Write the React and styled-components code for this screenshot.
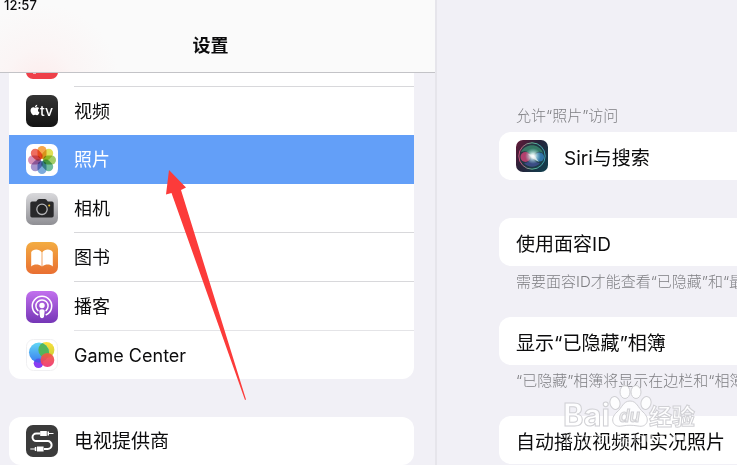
import React from "react";
import styled, { createGlobalStyle } from "styled-components";
import { FaApple } from "react-icons/fa";

const GlobalStyle = createGlobalStyle`
  * {
    box-sizing: border-box;
  }

  body {
    margin: 0;
    overflow: hidden;
    background-color: #f1f0f6;
    color: #0c0c0d;
    font-family: Inter, "Noto Sans CJK SC", sans-serif;
    font-size: 18px;
  }
`;

const Page = styled.div`
  position: relative;
  display: grid;
  grid-template-columns: minmax(0, 593fr) minmax(0, 407fr);
  height: 100vh;
  overflow: hidden;
`;

const Sidebar = styled.aside`
  border-right: 2px solid #e6e5eb;
  overflow: hidden;
`;

const Header = styled.header`
  height: 73px;
  padding: 0 22px 0 4px;
  border-bottom: 1px solid #c3c3c7;
  background: radial-gradient(circle at 40px 84px, #fdecec, #fbf5f5 35px, #fafafa 80px);
`;

const Time = styled.time`
  display: block;
  height: 12px;
  line-height: 10px;
  font-size: 13px;
  font-weight: 500;
`;

const Title = styled.h1`
  margin: 0;
  padding: 20px 0 0 4px;
  line-height: 28px;
  font-size: 18px;
  font-weight: 700;
  text-align: center;
`;

const Nav = styled.nav`
  padding: 0 21px 0 9px;
`;

const Group = styled.div`
  margin-bottom: 38px;
  border-radius: ${(props) => (props.$open ? "0 0 12px 12px" : "12px")};
  background-color: #fff;
  overflow: hidden;
`;

const Row = styled.a`
  display: flex;
  align-items: center;
  padding-left: 17px;
  background-color: ${(props) => (props.$active ? "#639ff8" : "transparent")};
  color: ${(props) => (props.$active ? "#fff" : "inherit")};
  font-size: ${(props) => (props.$large ? "19px" : "18px")};
  text-decoration: none;
`;

const CutRow = styled(Row)`
  height: 14px;
  align-items: flex-end;
  overflow: hidden;

  svg {
    margin-bottom: 8px;
  }
`;

const Label = styled.span`
  flex: 1;
  align-self: stretch;
  min-height: ${(props) => (props.$cut ? "0" : "48px")};
  margin-left: 16px;
  padding-top: 2px;
  line-height: 46px;
  border-bottom: ${(props) => (props.$line ? "1px solid" : "0 solid")};
  border-color: ${(props) => props.$line};
`;

const Icon = styled.svg`
  display: block;
  flex: none;
  width: 32px;
  height: 32px;
`;

const Detail = styled.main`
  padding: 106px 0 0 62px;
  overflow: hidden;
  white-space: nowrap;
`;

const Caption = styled.h2`
  margin: 0;
  padding: 0 0 6px 17px;
  line-height: 20px;
  font-size: 15px;
  font-weight: 300;
  color: #7e7e82;
`;

const Setting = styled.button`
  display: flex;
  align-items: center;
  gap: 16px;
  width: 100%;
  height: 48px;
  padding: 0 0 0 17px;
  border: 0;
  border-radius: 12px 0 0 12px;
  background-color: #fff;
  color: inherit;
  font: inherit;
  font-size: 19px;
  text-align: left;
  white-space: nowrap;
`;

const Spacer = styled.div`
  height: 38px;
`;

const Note = styled.p`
  height: 51px;
  margin: 0;
  padding: 6px 0 0 17px;
  line-height: 20px;
  font-size: 15px;
  font-weight: 300;
  color: #7e7e82;
`;

const Arrow = styled.svg`
  position: absolute;
  left: 160px;
  top: 165px;
  width: 90px;
  height: 240px;
  pointer-events: none;
`;

const Watermark = styled.svg`
  position: absolute;
  right: 36px;
  bottom: 10px;
  width: 140px;
  height: 72px;
  pointer-events: none;
`;

const NewsIcon = () => (
  <Icon viewBox="0 0 32 32">
    <rect width="32" height="32" rx="7" fill="#ee4049" />
    <path d="M7 22h3v5H7z" fill="#fff" opacity=".6" />
  </Icon>
);

const TvIcon = () => (
  <Icon viewBox="0 0 32 32">
    <defs>
      <linearGradient id="tv" x2="0" y2="1">
        <stop stopColor="#343434" />
        <stop offset="1" stopColor="#131313" />
      </linearGradient>
    </defs>
    <rect width="32" height="32" rx="7" fill="url(#tv)" />
    <FaApple x="3" y="9" size="12" color="#fff" />
    <text x="14" y="21" fontSize="14" fontWeight="500" fill="#fff">
      tv
    </text>
  </Icon>
);

const petals = [
  "#f59a32",
  "#dcdc3e",
  "#94c653",
  "#5bb391",
  "#6a9fd8",
  "#9a86c6",
  "#d183b0",
  "#ec5a4a",
];

const PhotosIcon = () => (
  <Icon viewBox="0 0 32 32">
    <rect width="32" height="32" rx="7" fill="#fff" />
    {petals.map((color, index) => (
      <rect
        key={color}
        x="11.5"
        y="2"
        width="9"
        height="13"
        rx="4.5"
        fill={color}
        opacity="0.88"
        style={{ mixBlendMode: "multiply" }}
        transform={`rotate(${index * 45} 16 16)`}
      />
    ))}
  </Icon>
);

const CameraIcon = () => (
  <Icon viewBox="0 0 32 32">
    <defs>
      <linearGradient id="camera" x2="0" y2="1">
        <stop stopColor="#d9d9dc" />
        <stop offset="1" stopColor="#8f8f94" />
      </linearGradient>
    </defs>
    <rect width="32" height="32" rx="7" fill="url(#camera)" />
    <path
      d="M6 8.600h4.200l1.600-2q.5-.6 1.300-.6h5.800q.8 0 1.300.6l1.600 2H26q1.700 0 1.700 1.700v12.500q0 1.700-1.700 1.700H6q-1.700 0-1.700-1.700V10.300Q4.300 8.600 6 8.600z"
      fill="#29292b"
    />
    <circle cx="16" cy="16.300" r="5.200" fill="#222" stroke="#b5b5b8" strokeWidth="1.300" />
    <circle cx="23.200" cy="12.500" r="1" fill="#f7c531" />
  </Icon>
);

const BooksIcon = () => (
  <Icon viewBox="0 0 32 32">
    <defs>
      <linearGradient id="books" x2="0" y2="1">
        <stop stopColor="#f3ac42" />
        <stop offset="1" stopColor="#e96f32" />
      </linearGradient>
    </defs>
    <rect width="32" height="32" rx="7" fill="url(#books)" />
    <path
      d="M15.600 10.300C14.300 8.300 12.300 7.500 10.300 7.500 8 7.500 6 8.500 5.200 10.300v14.200c1.500-1.400 3.200-2 5.100-2 2 0 3.800.6 5.300 2z"
      fill="#fff"
    />
    <path
      d="M16.400 10.300C17.700 8.300 19.700 7.500 21.700 7.500c2.300 0 4.300 1 5.100 2.800v14.200c-1.500-1.400-3.200-2-5.100-2-2 0-3.800.6-5.300 2z"
      fill="#fff"
    />
  </Icon>
);

const PodcastsIcon = () => (
  <Icon viewBox="0 0 32 32">
    <defs>
      <linearGradient id="podcasts" x2="0" y2="1">
        <stop stopColor="#c270ee" />
        <stop offset="1" stopColor="#7536b6" />
      </linearGradient>
    </defs>
    <rect width="32" height="32" rx="7" fill="url(#podcasts)" />
    <g fill="none" stroke="#fff" strokeWidth="1.500" strokeLinecap="round">
      <path d="M11.800 23.800A9.700 9.700 0 1 1 20.200 23.800" />
      <path d="M12 19.600A6.100 6.100 0 1 1 20 19.600" />
    </g>
    <circle cx="16" cy="14.500" r="2.700" fill="#fff" />
    <path
      d="M16 18.200c1.900 0 2.700.9 2.600 2.300l-.6 4.900q-.3 1.800-2 1.800t-2-1.800l-.6-4.900c-.1-1.400.7-2.300 2.600-2.300z"
      fill="#fff"
    />
  </Icon>
);

const GameCenterIcon = () => (
  <Icon viewBox="0 0 32 32">
    <defs>
      <linearGradient id="gc-blue" x2="0" y2="1">
        <stop stopColor="#62d8f5" />
        <stop offset="1" stopColor="#3a7df0" />
      </linearGradient>
      <linearGradient id="gc-yellow" x2="0" y2="1">
        <stop stopColor="#fbe03e" />
        <stop offset="1" stopColor="#c6cf35" />
      </linearGradient>
      <linearGradient id="gc-red" x2="0" y2="1">
        <stop stopColor="#f1603c" />
        <stop offset="1" stopColor="#ef3474" />
      </linearGradient>
      <clipPath id="gc-clip">
        <circle cx="13" cy="13.500" r="10" />
      </clipPath>
    </defs>
    <rect x=".5" y=".5" width="31" height="31" rx="7" fill="#fff" stroke="#f0f0f2" />
    <circle cx="12.500" cy="24.300" r="4.800" fill="#8a3df2" />
    <circle cx="20.400" cy="11" r="8" fill="url(#gc-yellow)" />
    <circle cx="13" cy="13.500" r="10" fill="url(#gc-blue)" />
    <circle cx="20.400" cy="11" r="8" fill="#52b65c" clipPath="url(#gc-clip)" />
    <circle cx="12.500" cy="24.300" r="4.800" fill="#5c35e6" opacity=".6" clipPath="url(#gc-clip)" />
    <circle cx="21.400" cy="21" r="6.900" fill="url(#gc-red)" opacity=".93" />
  </Icon>
);

const ProviderIcon = () => (
  <Icon viewBox="0 0 32 32">
    <rect width="32" height="32" rx="7" fill="#3b3b3b" />
    <path
      d="M14.500 8.500H10.300a3.800 3.800 0 0 0 0 7.600h11.400a3.900 3.900 0 0 1 0 7.800H18"
      fill="none"
      stroke="#fff"
      strokeWidth="2"
    />
    <path
      d="M14.200 6h6.600v5h-6.600zM21.500 6.500h1.500v4h-1.500zM23 8h4.500v1H23zM11 21.400h6.600v5H11zM8.800 22h1.500v4H8.800zM4.300 23.500H9v1H4.300z"
      fill="#fff"
    />
  </Icon>
);

const SiriIcon = () => (
  <Icon viewBox="0 0 32 32">
    <defs>
      <linearGradient id="siri-bg" x2="1" y2=".7">
        <stop stopColor="#651a38" />
        <stop offset=".5" stopColor="#262239" />
        <stop offset="1" stopColor="#143c4c" />
      </linearGradient>
      <linearGradient id="siri-ring" x2="1" y2="0">
        <stop stopColor="#d14b79" />
        <stop offset=".5" stopColor="#60b592" />
        <stop offset="1" stopColor="#3a9bb0" />
      </linearGradient>
      <radialGradient id="siri-glow">
        <stop stopColor="#fff" />
        <stop offset=".3" stopColor="#e3f7f6" stopOpacity=".85" />
        <stop offset="1" stopColor="#8cd6d2" stopOpacity="0" />
      </radialGradient>
    </defs>
    <rect width="32" height="32" rx="7" fill="url(#siri-bg)" />
    <circle cx="16" cy="16" r="13.200" fill="#1d4a4e" fillOpacity=".5" stroke="url(#siri-ring)" />
    <path d="M5 12C10 3 23 3 27 13 21 9 17 15 16 17 13 12 10 10 5 12z" fill="#41a77e" opacity=".6" />
    <circle cx="9.500" cy="17" r="5" fill="#e0447b" opacity=".75" />
    <circle cx="23.500" cy="17" r="4.500" fill="#3a92dc" opacity=".65" />
    <path d="M8 23c4 5 12 5 16 0-4 0-6-3-8-6-2 3-4 6-8 6z" fill="#5259b4" opacity=".55" />
    <circle cx="17" cy="16" r="8" fill="url(#siri-glow)" />
    <path d="M12 14l6 1 5 7-7-4z" fill="#fff" opacity=".6" />
  </Icon>
);

const apps = [
  { name: "视频", icon: TvIcon },
  { name: "照片", icon: PhotosIcon, active: true, line: "#639ff8" },
  { name: "相机", icon: CameraIcon, line: "#d8d8db" },
  { name: "图书", icon: BooksIcon, line: "#d8d8db" },
  { name: "播客", icon: PodcastsIcon, line: "#e4e4e7" },
  { name: "Game Center", icon: GameCenterIcon },
];

const App = () => (
  <Page>
    <GlobalStyle />
    <Sidebar>
      <Header>
        <Time>12:57</Time>
        <Title>设置</Title>
      </Header>
      <Nav>
        <Group $open>
          <CutRow as="div">
            <NewsIcon />
            <Label $cut $line="#d8d8db" />
          </CutRow>
          {apps.map(({ name, icon: AppIcon, active, line }) => (
            <Row
              key={name}
              href="#"
              $active={active}
              aria-current={active ? "page" : undefined}
            >
              <AppIcon />
              <Label $line={line}>{name}</Label>
            </Row>
          ))}
        </Group>
        <Group>
          <Row href="#" $large>
            <ProviderIcon />
            <Label>电视提供商</Label>
          </Row>
        </Group>
      </Nav>
    </Sidebar>
    <Detail>
      <Caption>允许“照片”访问</Caption>
      <Setting>
        <SiriIcon />
        Siri与搜索
      </Setting>
      <Spacer />
      <Setting>使用面容ID</Setting>
      <Note>需要面容ID才能查看“已隐藏”和“最</Note>
      <Setting>显示“已隐藏”相簿</Setting>
      <Note>“已隐藏”相簿将显示在边栏和“相簿</Note>
      <Setting>自动播放视频和实况照片</Setting>
    </Detail>
    <Arrow viewBox="0 0 90 240">
      <path d="M9 5L26 22.500 21 25 86 234.500 85 235 11.500 28 6 29.500z" fill="#fc3b3a" />
    </Arrow>
    <Watermark viewBox="0 0 140 72">
      <g fill="#fff" fillOpacity=".85" stroke="#d0d0d4" strokeWidth="1">
        <ellipse cx="54" cy="20" rx="5" ry="6.500" transform="rotate(-15 54 20)" />
        <ellipse cx="64" cy="9" rx="5" ry="6.500" />
        <ellipse cx="75" cy="9" rx="5" ry="6.500" />
        <ellipse cx="85" cy="20" rx="5" ry="6.500" transform="rotate(15 85 20)" />
        <path d="M69 18c7 0 8 7 13 11 8 7 4 16-5 14-6-1-10-1-16 0-9 2-13-7-5-14 5-4 6-11 13-11z" />
        <text x="2" y="43" fontSize="31" fontWeight="700">
          Bai
        </text>
        <text x="88" y="42" fontSize="23" fontWeight="700">
          经验
        </text>
        <text x="58" y="39" fontSize="17" fontWeight="600" fontStyle="italic" fill="#eee">
          du
        </text>
      </g>
      <text x="4" y="60" fontSize="14" fill="#fff" fillOpacity=".6">
        jingyan.baidu.com
      </text>
    </Watermark>
  </Page>
);

export default App;
